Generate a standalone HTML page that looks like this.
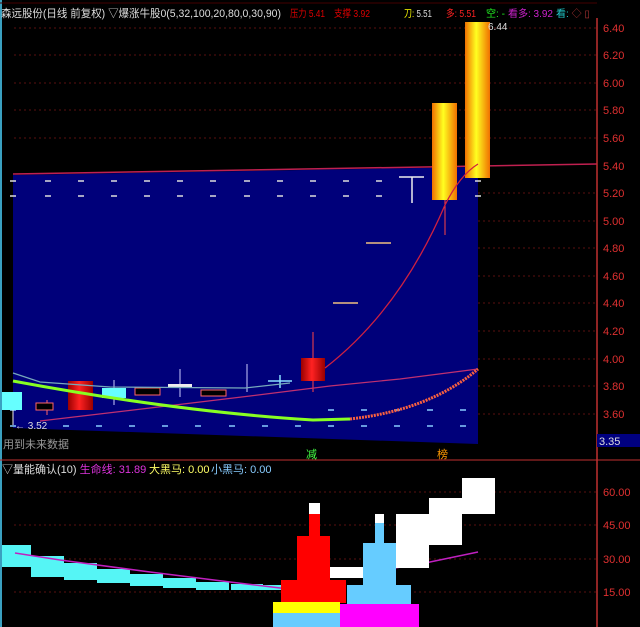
<!DOCTYPE html>
<html><head><meta charset="utf-8"><style>
body{margin:0;background:#000;width:640px;height:627px;overflow:hidden;font-family:"Liberation Sans","Noto Sans CJK SC",sans-serif}
svg{display:block}
text{font-family:"Liberation Sans","Noto Sans CJK SC",sans-serif}
</style></head><body>
<svg width="640" height="627" viewBox="0 0 640 627" xmlns="http://www.w3.org/2000/svg">
<defs>
<linearGradient id="yg" x1="0" x2="1" y1="0" y2="0">
<stop offset="0" stop-color="#f07000"/><stop offset="0.45" stop-color="#ffff20"/><stop offset="1" stop-color="#f07000"/></linearGradient>
<linearGradient id="rg" x1="0" x2="1" y1="0" y2="0">
<stop offset="0" stop-color="#900"/><stop offset="0.45" stop-color="#f22"/><stop offset="1" stop-color="#900"/></linearGradient>
</defs>
<rect width="640" height="627" fill="#000"/>
<line x1="1" y1="0" x2="1" y2="627" stroke="#3aa0c0" stroke-width="2"/>
<g stroke="#5a1010" stroke-dasharray="2,3" stroke-width="1">
<line x1="14" y1="28" x2="597" y2="28"/><line x1="14" y1="55" x2="597" y2="55"/><line x1="14" y1="83" x2="597" y2="83"/>
<line x1="14" y1="110" x2="597" y2="110"/><line x1="14" y1="138" x2="597" y2="138"/>
<line x1="478" y1="193" x2="597" y2="193"/><line x1="478" y1="221" x2="597" y2="221"/><line x1="478" y1="248" x2="597" y2="248"/>
<line x1="478" y1="276" x2="597" y2="276"/><line x1="478" y1="303" x2="597" y2="303"/><line x1="478" y1="331" x2="597" y2="331"/>
<line x1="478" y1="359" x2="597" y2="359"/><line x1="478" y1="386" x2="597" y2="386"/><line x1="478" y1="414" x2="597" y2="414"/>
<line x1="14" y1="492" x2="597" y2="492"/><line x1="14" y1="525" x2="597" y2="525"/><line x1="14" y1="559" x2="597" y2="559"/><line x1="14" y1="592" x2="597" y2="592"/>
</g>
<polygon points="13,175 478,167 478,444 13,428" fill="#00007a"/>
<line x1="13" y1="174" x2="597" y2="164" stroke="#c02050" stroke-width="1.5"/>
<g stroke="#ddd" stroke-width="1.5">
<path d="M10 181h6M45 181h6M78 181h6M111 181h6M144 181h6M177 181h6M210 181h6M244 181h6M277 181h6M310 181h6M343 181h6M376 181h6M475 181h6"/>
<path d="M10 196h6M45 196h6M78 196h6M111 196h6M144 196h6M177 196h6M210 196h6M244 196h6M277 196h6M310 196h6M343 196h6M376 196h6M475 196h6"/>
</g>
<g stroke="#8cf" stroke-width="1.5">
<path d="M10 426h6M63 426h6M96 426h6M129 426h6M162 426h6M195 426h6M229 426h6M262 426h6M295 426h6M328 426h6M361 426h6M394 426h6M427 426h6M460 426h6"/>
<path d="M10 410h6M328 410h6M361 410h6M394 410h6M427 410h6M460 410h6"/>
</g>
<line x1="13" y1="410" x2="13" y2="425" stroke="#eee"/>
<rect x="2" y="392" width="20" height="18" fill="#6ff"/>
<line x1="47" y1="400" x2="47" y2="415" stroke="#f66"/>
<rect x="36" y="403" width="17" height="7" fill="#000" stroke="#f66"/>
<rect x="68" y="381" width="25" height="29" fill="url(#rg)"/>
<line x1="114" y1="380" x2="114" y2="405" stroke="#ccf"/>
<rect x="102" y="388" width="24" height="10" fill="#6ff"/>
<rect x="135" y="388" width="25" height="7" fill="#000" stroke="#f66"/>
<line x1="180" y1="369" x2="180" y2="397" stroke="#ccf"/>
<rect x="168" y="384" width="24" height="3" fill="#eee"/>
<rect x="201" y="390" width="25" height="6" fill="#000" stroke="#f66"/>
<line x1="247" y1="364" x2="247" y2="392" stroke="#ccf"/>
<path d="M268 381h24M280 375v13" stroke="#8df" stroke-width="1.5"/>
<line x1="313" y1="332" x2="313" y2="392" stroke="#f44"/>
<rect x="301" y="358" width="24" height="23" fill="url(#rg)"/>
<line x1="333" y1="303" x2="358" y2="303" stroke="#f0c080" stroke-width="1.5"/>
<line x1="366" y1="243" x2="391" y2="243" stroke="#f0c080" stroke-width="1.5"/>
<path d="M399 177h25M412 177v26" stroke="#eee" stroke-width="1.5"/>
<line x1="445" y1="200" x2="445" y2="235" stroke="#f44"/>
<rect x="432" y="103" width="25" height="97" fill="url(#yg)"/>
<rect x="465" y="22" width="25" height="156" fill="url(#yg)"/>
<polyline points="13,373 40,382 110,387 245,388 290,383" fill="none" stroke="#7ab" stroke-width="1.2"/>
<polyline points="40,421 150,408 250,396 330,386 400,379 478,369" fill="none" stroke="#c03070" stroke-width="1.2"/>
<path d="M13 381 Q180 412 313 420 L350 419" fill="none" stroke="#8f2" stroke-width="3"/>
<path d="M350 419 Q430 410 478 369" fill="none" stroke="#f86040" stroke-width="3" stroke-dasharray="2,1"/>
<path d="M325 368 Q400 310 445 205 Q460 175 478 164" fill="none" stroke="#d02040" stroke-width="1.3"/>
<text x="15" y="429" fill="#ddd" font-size="10">← 3.52</text>
<text x="488" y="30" fill="#ddd" font-size="10">6.44</text>
<text x="3" y="448" fill="#999" font-size="11">用到未来数据</text>
<line x1="597" y1="18" x2="597" y2="627" stroke="#c03030" stroke-width="1.5"/>
<g fill="#e03030" font-size="11">
<text x="603" y="32">6.40</text><text x="603" y="59">6.20</text><text x="603" y="87">6.00</text><text x="603" y="114">5.80</text>
<text x="603" y="142">5.60</text><text x="603" y="170">5.40</text><text x="603" y="197">5.20</text><text x="603" y="225">5.00</text>
<text x="603" y="252">4.80</text><text x="603" y="280">4.60</text><text x="603" y="307">4.40</text><text x="603" y="335">4.20</text>
<text x="603" y="363">4.00</text><text x="603" y="390">3.80</text><text x="603" y="418">3.60</text>
<text x="603" y="496">60.00</text><text x="603" y="529">45.00</text><text x="603" y="563">30.00</text><text x="603" y="596">15.00</text>
</g>
<rect x="597" y="434" width="43" height="13" fill="#000080"/>
<text x="599" y="445" fill="#ddd" font-size="11">3.35</text>
<line x1="0" y1="460" x2="640" y2="460" stroke="#c03030" stroke-width="1"/>
<text x="306" y="458" fill="#4f4" font-size="11">减</text>
<text x="437" y="458" fill="#f90" font-size="11">榜</text>
<line x1="0" y1="3" x2="597" y2="3" stroke="#400" />
<text x="1" y="17" fill="#ddd" font-size="11" textLength="280" lengthAdjust="spacingAndGlyphs">森远股份(日线 前复权) ▽爆涨牛股0(5,32,100,20,80,0,30,90)</text>
<text x="290" y="17" fill="#d00" font-size="10" textLength="35" lengthAdjust="spacingAndGlyphs">压力 5.41</text>
<text x="334" y="17" fill="#d00" font-size="10" textLength="36" lengthAdjust="spacingAndGlyphs">支撑 3.92</text>
<text x="404" y="17" fill="#ff0" font-size="10" textLength="28" lengthAdjust="spacingAndGlyphs">刀: <tspan fill="#ddd">5.51</tspan></text>
<text x="446" y="17" fill="#f22" font-size="10" textLength="30" lengthAdjust="spacingAndGlyphs">多: 5.51</text>
<text x="486" y="17" fill="#2e2" font-size="10" textLength="19" lengthAdjust="spacingAndGlyphs">空: -</text>
<text x="508" y="17" fill="#c2c" font-size="10" textLength="45" lengthAdjust="spacingAndGlyphs">看多: 3.92</text>
<text x="556" y="17" fill="#2cc" font-size="10">看: <tspan fill="#a33">◇ ▯</tspan></text>
<text x="2" y="473" fill="#ddd" font-size="11">▽量能确认(10) <tspan fill="#d3d">生命线: 31.89</tspan></text>
<text x="149" y="473" fill="#ff6" font-size="11">大黑马: 0.00</text>
<text x="211" y="473" fill="#8cf" font-size="11">小黑马: 0.00</text>
<g fill="#55f5f5">
<rect x="2" y="545" width="29" height="22"/><rect x="31" y="556" width="33" height="21"/><rect x="64" y="563" width="33" height="17"/>
<rect x="97" y="569" width="33" height="14"/><rect x="130" y="574" width="33" height="12"/><rect x="163" y="578" width="33" height="10"/>
<rect x="196" y="582" width="33" height="8"/><rect x="231" y="584" width="32" height="6"/><rect x="263" y="585" width="18" height="5"/>
</g>
<polyline points="15,553 60,560 150,572 230,582 297,590" fill="none" stroke="#c020c0" stroke-width="1.5"/>
<polyline points="395,568 430,562 478,552" fill="none" stroke="#c020c0" stroke-width="1.5"/>
<g fill="#f00"><rect x="281" y="580" width="65" height="23"/><rect x="297" y="536" width="33" height="44"/><rect x="309" y="514" width="11" height="22"/></g>
<rect x="309" y="503" width="11" height="11" fill="#fff"/>
<rect x="273" y="602" width="67" height="11" fill="#ff0"/>
<rect x="273" y="613" width="67" height="14" fill="#6cf"/>
<rect x="340" y="604" width="79" height="23" fill="#f0f"/>
<g fill="#6cf"><rect x="347" y="585" width="64" height="19"/><rect x="363" y="543" width="33" height="42"/><rect x="375" y="523" width="9" height="20"/></g>
<rect x="375" y="514" width="9" height="9" fill="#fff"/>
<g fill="#fff"><rect x="330" y="567" width="33" height="11"/><rect x="396" y="514" width="33" height="54"/><rect x="429" y="498" width="33" height="47"/><rect x="462" y="478" width="33" height="36"/></g>
</svg>
</body></html>
